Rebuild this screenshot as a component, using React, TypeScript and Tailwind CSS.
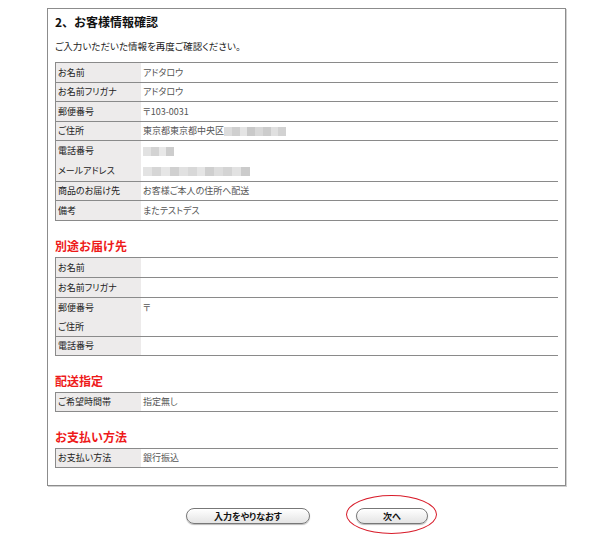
import React from 'react';

type Line = { label: string; value?: React.ReactNode };
type Row = { lines: Line[]; h: string };

const font = "font-['Noto_Sans_CJK_JP','Noto_Sans',sans-serif] [font-feature-settings:'palt']";

// ぼかし処理された個人情報の代わり
const Blurred = ({ w, shades }: { w: string; shades: string[] }) => (
  <span className={`inline-flex h-[9px] ${w} blur-[0.6px] align-middle`}>
    {shades.map((s, i) => (
      <span key={i} className={`h-full flex-1 ${s}`} />
    ))}
  </span>
);

const customerRows: Row[] = [
  { lines: [{ label: 'お名前', value: 'アドタロウ' }], h: 'h-[20px]' },
  { lines: [{ label: 'お名前フリガナ', value: 'アドタロウ' }], h: 'h-[19px]' },
  { lines: [{ label: '郵便番号', value: '〒103-0031' }], h: 'h-[20px]' },
  {
    lines: [
      {
        label: 'ご住所',
        value: (
          <span className="flex items-center">
            東京都東京都中央区
            <Blurred
              w="w-[62px]"
              shades={['bg-[#dcdcdc]', 'bg-[#cfcfcf]', 'bg-[#e4e4e4]', 'bg-[#c9c9c9]', 'bg-[#d8d8d8]', 'bg-[#cccccc]', 'bg-[#e0e0e0]', 'bg-[#d2d2d2]']}
            />
          </span>
        ),
      },
    ],
    h: 'h-[19px]',
  },
  {
    lines: [
      {
        label: '電話番号',
        value: <Blurred w="w-[31px]" shades={['bg-[#e2e2e2]', 'bg-[#d3d3d3]', 'bg-[#e8e8e8]', 'bg-[#cdcdcd]']} />,
      },
      {
        label: 'メールアドレス',
        value: (
          <Blurred
            w="w-[107px]"
            shades={['bg-[#e3e3e3]', 'bg-[#d6d6d6]', 'bg-[#e6e6e6]', 'bg-[#d0d0d0]', 'bg-[#e1e1e1]', 'bg-[#d8d8d8]', 'bg-[#e5e5e5]', 'bg-[#cfcfcf]', 'bg-[#dddddd]', 'bg-[#d4d4d4]', 'bg-[#e2e2e2]', 'bg-[#cbcbcb]']}
          />
        ),
      },
    ],
    h: 'h-[41px]',
  },
  { lines: [{ label: '商品のお届け先', value: 'お客様ご本人の住所へ配送' }], h: 'h-[19px]' },
  { lines: [{ label: '備考', value: 'またテストデス' }], h: 'h-[20px]' },
];

const deliveryRows: Row[] = [
  { lines: [{ label: 'お名前' }], h: 'h-[20px]' },
  { lines: [{ label: 'お名前フリガナ' }], h: 'h-[20px]' },
  { lines: [{ label: '郵便番号', value: '〒' }, { label: 'ご住所' }], h: 'h-[39px]' },
  { lines: [{ label: '電話番号' }], h: 'h-[19px]' },
];

const timeRows: Row[] = [{ lines: [{ label: 'ご希望時間帯', value: '指定無し' }], h: 'h-[19px]' }];
const payRows: Row[] = [{ lines: [{ label: 'お支払い方法', value: '銀行振込' }], h: 'h-[19px]' }];

const InfoTable = ({ rows }: { rows: Row[] }) => (
  <div className="border-t border-l border-[#8a8a8a] mr-[7px]">
    {rows.map((row, i) => (
      <div key={i} className={`flex border-b border-[#8a8a8a] ${row.h}`}>
        <div className="w-[85px] bg-[#edebeb] flex flex-col justify-around pl-[2px] text-[#222]">
          {row.lines.map((l, j) => (
            <div key={j} className="leading-[12px]">{l.label}</div>
          ))}
        </div>
        <div className="flex-1 flex flex-col justify-around pl-[2px] text-[#555]">
          {row.lines.map((l, j) => (
            <div key={j} className="leading-[12px] h-[12px] flex items-center">{l.value}</div>
          ))}
        </div>
      </div>
    ))}
  </div>
);

const SectionTitle = ({ children }: { children: React.ReactNode }) => (
  <div className="h-[36px] flex items-end pb-[2px]">
    <h3 className="text-[12px] leading-[18px] font-bold text-[#ee1a1a] [font-feature-settings:normal]">{children}</h3>
  </div>
);

const PillButton = ({ label, w }: { label: string; w: string }) => (
  <button
    className={`${w} h-[16px] rounded-full border border-[#777] bg-[linear-gradient(#ffffff,#e4e4e4)] shadow-[inset_0_1px_0_#fff,0_1px_1px_#bbb] text-[9px] font-bold text-[#111] leading-none`}
  >
    {label}
  </button>
);

export default function App() {
  return (
    <div className={`w-[614px] h-[536px] bg-white text-[9px] ${font}`}>
      <div className="pt-[8px] pl-[47px]">
        <div className="w-[519px] border border-[#8c8c8c] shadow-[1px_1px_0_#d0d0d0] pl-[7px] pb-[17px]">
          <div className="h-[26px] flex items-center">
            <h2 className="text-[12px] font-bold text-[#111] [font-feature-settings:normal]">2、お客様情報確認</h2>
          </div>
          <div className="h-[22px] flex items-center text-[9.5px] text-[#222]">ご入力いただいた情報を再度ご確認ください。</div>
          <div className="mt-[5px]">
            <InfoTable rows={customerRows} />
          </div>

          <SectionTitle>別途お届け先</SectionTitle>
          <InfoTable rows={deliveryRows} />

          <SectionTitle>配送指定</SectionTitle>
          <InfoTable rows={timeRows} />

          <SectionTitle>お支払い方法</SectionTitle>
          <InfoTable rows={payRows} />
        </div>
      </div>

      <div className="mt-[22px] flex justify-center gap-[46px]">
        <PillButton label="入力をやりなおす" w="w-[124px]" />
        <div className="relative">
          <PillButton label="次へ" w="w-[72px]" />
          <div className="absolute left-[-10px] top-[-13px] w-[91px] h-[39px] rounded-[50%] border border-[#d81c2a] pointer-events-none" />
        </div>
      </div>
    </div>
  );
}
